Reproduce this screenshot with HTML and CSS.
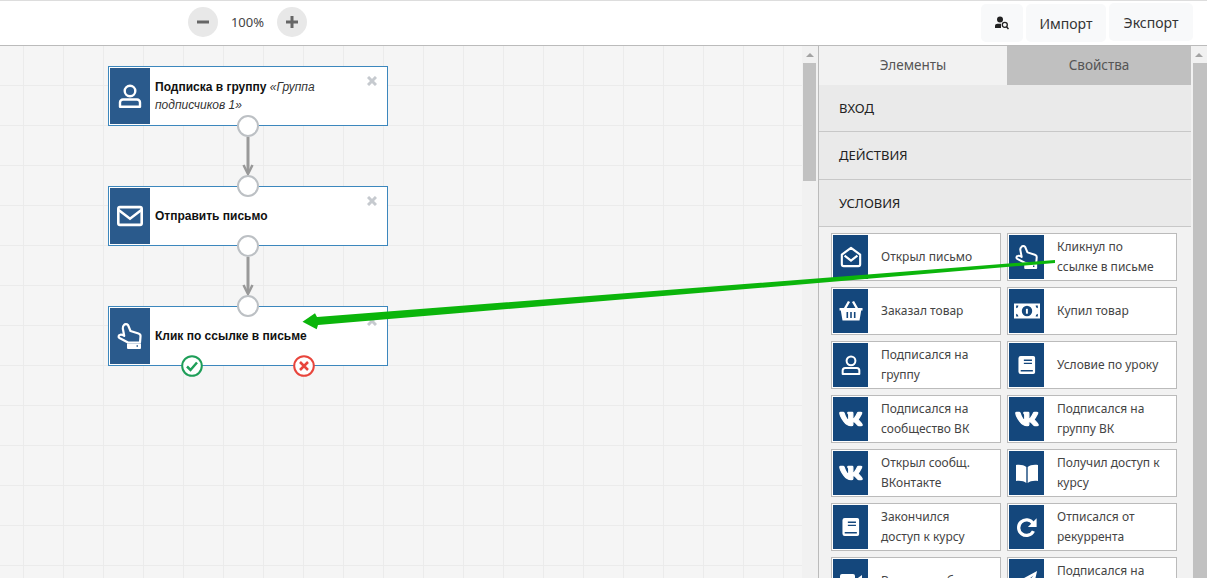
FILE: index.html
```html
<!DOCTYPE html>
<html lang="ru">
<head>
    <meta charset="UTF-8">
    <title>Редактор процесса</title>
    <link rel="stylesheet" href="styles.css">
</head>
<body>

<svg class="icon-defs" width="0" height="0">
    <symbol id="i-user" viewBox="0 0 24 24">
        <circle cx="12" cy="7" r="5.3" fill="none" stroke="#fff" stroke-width="2.4"/>
        <path d="M5 15.5h14a3 3 0 0 1 3 3v4.300H2v-4.300a3 3 0 0 1 3-3z" fill="none" stroke="#fff" stroke-width="2.4" stroke-linejoin="round"/>
    </symbol>
    <symbol id="i-mail" viewBox="0 0 24 24">
        <rect x="1.2" y="3.8" width="21.6" height="16.4" rx="1.5" fill="none" stroke="#fff" stroke-width="2.4"/>
        <path d="M1.5 6.5 12 14.5 22.500 6.500" fill="none" stroke="#fff" stroke-width="2.4"/>
    </symbol>
    <symbol id="i-hand" viewBox="0 0 26 26">
        <path d="M7 2c1-1.200 3-1 4 0l2.500 6 8 2.500c1.500.5 2.200 1.500 2 3l-.5 6H11L2.500 15c-1.500-1-1-3 .5-3.200 1-.2 3 .2 4.200 1L5.800 5.500C5.500 4 6 3 7 2z" fill="none" stroke="#fff" stroke-width="2.2" stroke-linejoin="round"/>
        <path fill="#fff" fill-rule="evenodd" d="M10 20.500h14V25a1 1 0 0 1-1 1H11a1 1 0 0 1-1-1zM19.500 22.300v1.500H21v-1.500z"/>
    </symbol>
    <symbol id="i-open-mail" viewBox="0 0 24 24">
        <path d="M2 9.500 12 2l10 7.500V20a2 2 0 0 1-2 2H4a2 2 0 0 1-2-2z" fill="none" stroke="#fff" stroke-width="2.3" stroke-linejoin="round"/>
        <path d="M5 10.500l7 5.500 7-5.500" fill="none" stroke="#fff" stroke-width="2.3"/>
    </symbol>
    <symbol id="i-basket" viewBox="0 0 24 24">
        <path d="M10 2.500 6 9.500M14 2.500l4 7" stroke="#fff" stroke-width="2.4" fill="none"/>
        <path fill="#fff" fill-rule="evenodd" d="M.5 9h23v2.500h-1.300L20.500 21.500h-17L1.800 11.500H.5zM7.500 13v6h1.600v-6zm3.700 0v6h1.600v-6zm3.700 0v6h1.600v-6z"/>
    </symbol>
    <symbol id="i-money" viewBox="0 0 24 24">
        <path fill="#fff" fill-rule="evenodd" d="M0 5h24v14H0zM2 7v2.500A2.500 2.500 0 0 0 4 7zm18 0a2.500 2.500 0 0 0 2 2.500V7zM2 14.500V17h2a2.500 2.500 0 0 0-2-2.500zM20 17h2v-2.500A2.500 2.500 0 0 0 20 17zM12 7.200a4.800 4.800 0 1 0 0 9.600 4.800 4.800 0 0 0 0-9.600z"/>
        <path fill="#fff" d="M11 10h1.800v4.500H11z"/>
    </symbol>
    <symbol id="i-book" viewBox="0 0 20 22">
        <path fill="#fff" fill-rule="evenodd" d="M3 1h14a2 2 0 0 1 2 2v16a2 2 0 0 1-2 2H3a2.500 2.500 0 0 1-2.500-2.500v-15A2.500 2.500 0 0 1 3 1zm3.500 4v1.500h9V5zm0 3.500V10h9V8.500zM3 16.500v1.800h13.500v-1.800z"/>
    </symbol>
    <symbol id="i-vk" viewBox="0 0 576 512">
        <path fill="#fff" stroke="#fff" stroke-width="28" d="M545 117.700c3.700-12.500 0-21.700-17.800-21.700h-58.900c-15 0-21.900 7.900-25.600 16.700 0 0-30 73.700-72.400 121.500-13.700 13.700-20 18.100-27.500 18.100-3.700 0-9.400-4.400-9.400-16.900V117.700c0-15-4.200-21.700-16.600-21.700h-92.600c-9.400 0-15 7-15 13.500 0 14.200 21.200 17.500 23.400 57.500v86.800c0 19-3.400 22.500-10.900 22.500-20 0-68.600-73.400-97.400-157.400-5.800-16.300-11.500-22.900-26.600-22.900H38.800c-16.800 0-20.200 7.900-20.200 16.700 0 15.600 20 93.100 93.100 195.500C160.400 378.100 229 416 291.400 416c37.500 0 42.100-8.400 42.100-22.900 0-66.800-3.400-73.100 15.400-73.100 8.700 0 23.700 4.400 58.700 38.100 40 40 46.600 57.900 69 57.900h58.900c16.800 0 25.300-8.400 20.400-25-11.200-34.900-86.900-106.700-90.300-111.500-8.700-11.200-6.200-16.200 0-26.200.1-.1 72-101.300 79.400-135.600z"/>
    </symbol>
    <symbol id="i-open-book" viewBox="0 0 24 24">
        <path fill="#fff" d="M1 4c4-.6 8 0 10.300 2v16C9 20 5 19.400 1 20zM23 4c-4-.6-8 0-10.300 2v16c2.300-2 6.300-2.600 10.300-2z"/>
    </symbol>
    <symbol id="i-redo" viewBox="0 0 24 24">
        <path d="M18.500 8A8.500 8.500 0 1 0 19 16.500" fill="none" stroke="#fff" stroke-width="3.600"/>
        <path fill="#fff" d="M22.500 2.500V12H13z"/>
    </symbol>
    <symbol id="i-video" viewBox="0 0 24 24">
        <rect x="1" y="5" width="15" height="14" rx="2" fill="#fff"/>
        <path fill="#fff" d="M17.500 10 23 6v12l-5.500-4z"/>
    </symbol>
    <symbol id="i-plane" viewBox="0 0 24 24">
        <path fill="#fff" d="M23 1 1 13l6 2.500L19 6 10 17v6l3.500-4.500 5 2z"/>
    </symbol>
    <symbol id="i-close" viewBox="0 0 10 10">
        <path d="M1 1l8 8M9 1l-8 8" stroke="#c6cacf" stroke-width="3"/>
    </symbol>
</svg>

<div class="topbar">
    <div class="zoom">
        <button class="zoom-btn">
            <svg width="14" height="14" viewBox="0 0 14 14"><path d="M1 7h12" stroke="#666" stroke-width="3"/></svg>
        </button>
        <span class="zoom-value">100%</span>
        <button class="zoom-btn">
            <svg width="14" height="14" viewBox="0 0 14 14"><path d="M1 7h12M7 1v12" stroke="#666" stroke-width="3"/></svg>
        </button>
    </div>
    <div class="actions">
        <button class="action action-icon">
            <svg width="14" height="14" viewBox="0 0 14 14">
                <circle cx="5" cy="3.500" r="3" fill="#222"/>
                <path d="M0 12V10c0-1.500 1-2.300 2.500-2.300H6V12z" fill="#222"/>
                <circle cx="9.800" cy="8.800" r="2.500" fill="none" stroke="#222" stroke-width="1.300"/>
                <path d="M11.500 10.800 13.500 13" stroke="#222" stroke-width="1.500"/>
            </svg>
        </button>
        <button class="action action-import">Импорт</button>
        <button class="action action-export">Экспорт</button>
    </div>
</div>

<div class="workspace">
    <div class="canvas">
        <!-- стрелки между блоками -->
        <svg class="links" width="800" height="400">
            <g stroke="#999" stroke-width="3" fill="none">
                <path d="M248 91v36"/>
                <path d="M248 211v36"/>
                <path d="M243.500 119l4.500 9 4.500-9" stroke-width="2.500"/>
                <path d="M243.500 239l4.500 9 4.500-9" stroke-width="2.500"/>
            </g>
        </svg>

        <div class="node node-1">
            <div class="node-icon"><svg width="24" height="24"><use href="#i-user"/></svg></div>
            <div class="node-text"><b>Подписка в группу</b> <i>«Группа подписчиков 1»</i></div>
            <svg class="node-close" width="10" height="10"><use href="#i-close"/></svg>
            <span class="port port-bottom"></span>
        </div>
        <div class="node node-2">
            <div class="node-icon"><svg width="26" height="26"><use href="#i-mail"/></svg></div>
            <div class="node-text"><b>Отправить письмо</b></div>
            <svg class="node-close" width="10" height="10"><use href="#i-close"/></svg>
            <span class="port port-top"></span>
            <span class="port port-bottom"></span>
        </div>
        <div class="node node-3">
            <div class="node-icon"><svg width="26" height="26"><use href="#i-hand"/></svg></div>
            <div class="node-text"><b>Клик по ссылке в письме</b></div>
            <svg class="node-close" width="10" height="10"><use href="#i-close"/></svg>
            <span class="port port-top"></span>
            <svg class="result result-yes" width="22" height="22" viewBox="0 0 22 22">
                <circle cx="11" cy="11" r="9.800" fill="#fff" stroke="#1e9e58" stroke-width="2"/>
                <path d="M6 11.500l3.500 3.500L16 7.500" fill="none" stroke="#1e9e58" stroke-width="2.500"/>
            </svg>
            <svg class="result result-no" width="22" height="22" viewBox="0 0 22 22">
                <circle cx="11" cy="11" r="9.800" fill="#fff" stroke="#e8453c" stroke-width="2"/>
                <path d="M7 7l8 8M15 7l-8 8" fill="none" stroke="#e8453c" stroke-width="2.500"/>
            </svg>
        </div>
    </div>

    <div class="scrollbar"><span class="scroll-arrow"></span><div class="scroll-thumb scroll-thumb-short"></div></div>

    <div class="panel">
        <div class="tabs">
            <div class="tab tab-active">Элементы</div>
            <div class="tab">Свойства</div>
        </div>
        <div class="section">ВХОД</div>
        <div class="section section-mid">ДЕЙСТВИЯ</div>
        <div class="section">УСЛОВИЯ</div>
        <div class="items">
            <div class="item"><div class="item-icon"><svg width="22" height="22"><use href="#i-open-mail"/></svg></div><span>Открыл письмо</span></div>
            <div class="item"><div class="item-icon"><svg width="24" height="24"><use href="#i-hand"/></svg></div><span>Кликнул по ссылке в письме</span></div>
            <div class="item"><div class="item-icon"><svg width="24" height="24"><use href="#i-basket"/></svg></div><span>Заказал товар</span></div>
            <div class="item"><div class="item-icon"><svg width="26" height="26"><use href="#i-money"/></svg></div><span>Купил товар</span></div>
            <div class="item"><div class="item-icon"><svg width="20" height="20"><use href="#i-user"/></svg></div><span>Подписался на группу</span></div>
            <div class="item"><div class="item-icon"><svg width="18" height="20"><use href="#i-book"/></svg></div><span>Условие по уроку</span></div>
            <div class="item"><div class="item-icon"><svg width="24" height="24"><use href="#i-vk"/></svg></div><span>Подписался на сообщество ВК</span></div>
            <div class="item"><div class="item-icon"><svg width="24" height="24"><use href="#i-vk"/></svg></div><span>Подписался на группу ВК</span></div>
            <div class="item"><div class="item-icon"><svg width="24" height="24"><use href="#i-vk"/></svg></div><span>Открыл сообщ. ВКонтакте</span></div>
            <div class="item"><div class="item-icon"><svg width="24" height="24"><use href="#i-open-book"/></svg></div><span>Получил доступ к курсу</span></div>
            <div class="item"><div class="item-icon"><svg width="18" height="20"><use href="#i-book"/></svg></div><span>Закончился доступ к курсу</span></div>
            <div class="item"><div class="item-icon"><svg width="22" height="22"><use href="#i-redo"/></svg></div><span>Отписался от рекуррента</span></div>
            <div class="item"><div class="item-icon"><svg width="24" height="24"><use href="#i-video"/></svg></div><span>Вошел в вебинар</span></div>
            <div class="item"><div class="item-icon"><svg width="22" height="22"><use href="#i-plane"/></svg></div><span>Подписался на телеграм</span></div>
        </div>
    </div>

    <div class="scrollbar scrollbar-right"><span class="scroll-arrow"></span><div class="scroll-thumb"></div></div>
</div>

<!-- стрелка-пометка поверх экрана -->
<svg class="annotation" width="1207" height="578" viewBox="0 0 1207 578">
    <path d="M1055 260L1055 263L318 325L316.700 329.300L302.500 321.700L315 313.300L317 317Z" fill="#0bb50b"/>
</svg>

</body>
</html>
```

FILE: styles.css
```css
* {
    box-sizing: border-box;
}
html, body {
    margin: 0;
    height: 100%;
    overflow: hidden;
}
body {
    font-family: "Noto Sans", Arial, sans-serif;
    background-color: #fff;
    color: #333;
    display: flex;
    flex-direction: column;
}
.icon-defs {
    position: absolute;
}

/* верхняя панель */
.topbar {
    height: 46px;
    flex: none;
    border-top: 1px solid #ddd;
    border-bottom: 1px solid #bbb;
    display: flex;
    justify-content: space-between;
    padding: 0 14px 0 188px;
}
.zoom {
    display: flex;
    align-items: center;
    gap: 14px;
    padding-bottom: 2px;
}
.zoom-btn {
    width: 30px;
    height: 30px;
    border: none;
    border-radius: 50%;
    background-color: #e8e8e8;
    padding: 0;
    display: flex;
    align-items: center;
    justify-content: center;
}
.zoom-value {
    font-size: 13px;
    color: #444;
    width: 31px;
    display: flex;
    justify-content: center;
    white-space: nowrap;
}
.actions {
    display: flex;
    gap: 3px;
    padding-top: 3px;
}
.action {
    height: 38px;
    padding: 0;
    border: none;
    border-radius: 5px;
    background-color: #f8f9fa;
    font-family: inherit;
    font-size: 14px;
    color: #333;
}
.action-icon {
    width: 42px;
    display: flex;
    align-items: center;
    justify-content: center;
}
.action-import {
    width: 80px;
}
.action-export {
    width: 84px;
    margin-top: -1px;
}

/* рабочая область */
.workspace {
    flex: 1;
    display: flex;
    min-height: 0;
}
.canvas {
    position: relative;
    width: 802px;
    flex: none;
    overflow: hidden;
    background-color: #f5f5f5;
    background-image:
        linear-gradient(to right, #ebebeb 1px, transparent 1px),
        linear-gradient(to bottom, #ebebeb 1px, transparent 1px);
    background-size: 40px 40px;
    background-position: 23px 39px;
}
.links {
    position: absolute;
    left: 0;
    top: 0;
}
.node {
    position: absolute;
    left: 108px;
    width: 280px;
    height: 60px;
    padding: 1px;
    background-color: #fff;
    border: 1px solid #3c87bd;
    display: flex;
    align-items: center;
}
.node-1 { top: 20px; }
.node-2 { top: 140px; }
.node-3 { top: 260px; }
.node-icon {
    width: 40px;
    height: 100%;
    flex: none;
    background-color: #2a5a8c;
    display: flex;
    align-items: center;
    justify-content: center;
}
.node-text {
    font-family: "Liberation Sans", Arial, sans-serif;
    font-size: 12px;
    line-height: 18px;
    color: #111;
    padding: 0 30px 0 5px;
}
.node-text i {
    color: #333;
}
.node-close {
    position: absolute;
    right: 10px;
    top: 9px;
}
.port {
    position: absolute;
    left: 128px;
    width: 22px;
    height: 22px;
    border-radius: 50%;
    background-color: #fff;
    border: 2px solid #bcc0c4;
}
.port-top { top: -12px; }
.port-bottom { bottom: -12px; }
.result {
    position: absolute;
    bottom: -12px;
}
.result-yes { left: 72px; }
.result-no { left: 184px; }

/* скроллбары */
.scrollbar {
    width: 16px;
    flex: none;
    background-color: #f1f1f1;
    padding-top: 17px;
    position: relative;
}
.scrollbar-right {
    width: 15px;
}
.scrollbar-right .scroll-arrow {
    left: 3px;
}
.scroll-thumb {
    height: 100%;
    margin-left: 1px;
    background-color: #c1c1c1;
}
.scroll-thumb-short {
    height: 118px;
    margin-right: 2px;
}
.scroll-arrow {
    position: absolute;
    left: 4px;
    top: 7px;
    border-left: 4px solid transparent;
    border-right: 4px solid transparent;
    border-bottom: 4px solid #a3a3a3;
}

/* правая панель */
.panel {
    width: 374px;
    flex: none;
    border-left: 1px solid #bbb;
    background-color: #f2f2f2;
    overflow: hidden;
}
.tabs {
    display: flex;
    height: 39px;
}
.tab {
    width: 184px;
    flex: none;
    background-color: #c0c0c0;
    color: #555;
    font-size: 13.5px;
    text-align: center;
    line-height: 39px;
}
.tab-active {
    width: 188px;
    background-color: #f2f2f2;
}
.section {
    height: 47px;
    margin-right: 1px;
    padding: 0 20px;
    font-size: 13px;
    line-height: 46px;
    color: #222;
    background-color: #eaeaea;
    border-bottom: 1px solid #c8c8c8;
}
.section-mid {
    height: 48px;
}
.items {
    display: grid;
    grid-template-columns: 170px 170px;
    grid-auto-rows: 48px;
    column-gap: 6px;
    row-gap: 6px;
    padding: 6px 0 0 12px;
}
.item {
    display: flex;
    align-items: center;
    background-color: #fff;
    border: 1px solid #bbb;
    padding: 1px;
}
.item-icon {
    width: 35px;
    height: 44px;
    flex: none;
    background-color: #14477c;
    display: flex;
    align-items: center;
    justify-content: center;
}
.item span {
    font-size: 12px;
    line-height: 20px;
    color: #444;
    padding: 0 13px 0 13px;
}

/* пометка */
.annotation {
    position: absolute;
    left: 0;
    top: 0;
    pointer-events: none;
}
```
